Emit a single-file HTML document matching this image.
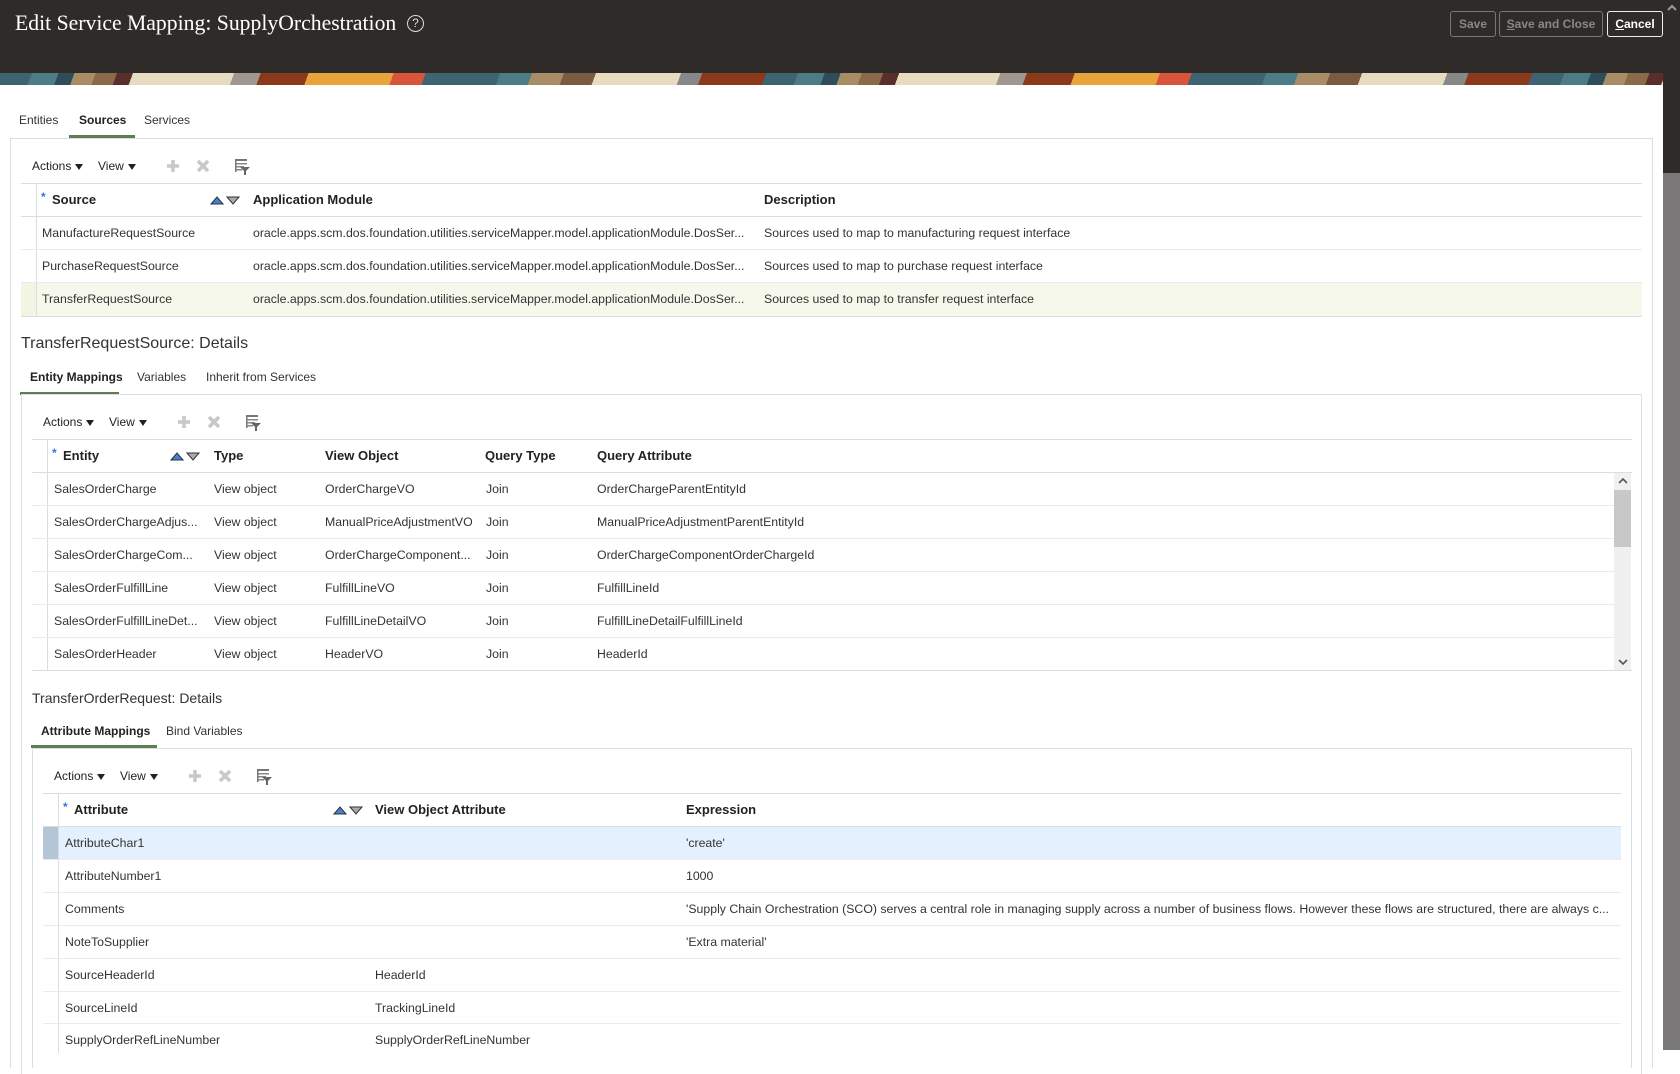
<!DOCTYPE html>
<html><head><meta charset="utf-8">
<style>
*{box-sizing:border-box;margin:0;padding:0}
body{width:1680px;height:1050px;overflow:hidden;background:#fff;font-family:"Liberation Sans",Arial,sans-serif;color:#333;position:relative;font-size:12px}
.a{position:absolute;white-space:nowrap}
.hdr{position:absolute;left:0;top:0;width:1663px;height:73px;background:#2f2b28}
.banner{position:absolute;left:0;top:73px;width:1663px;height:12px;background:repeating-linear-gradient(110deg,#3e6471 0 30px,#4c7c88 30px 55px,#2f4d58 55px 70px,#a88c66 70px 90px,#8a6a48 90px 110px,#5a2e2a 110px 125px,#e8dcc0 125px 220px,#a09890 220px 245px,#8a3a1a 245px 290px,#e8a33a 290px 370px,#d8543a 370px 400px,#3e6471 400px 470px,#4c7c88 470px 500px,#a88c66 500px 530px,#7a5a40 530px 560px,#e8dcc0 560px 640px,#888 640px 660px,#8a3a1a 660px 720px)}
.title{left:15px;top:11px;font-family:"Liberation Serif",serif;font-size:21.7px;color:#fff}
.help{left:407px;top:15px;width:17px;height:17px;border:1.5px solid #ddd;border-radius:50%;color:#ddd;font-size:12px;text-align:center;line-height:14px}
.btn{position:absolute;top:11px;height:26px;border:1px solid #777;border-radius:3px;color:#888;font-size:12px;font-weight:bold;text-align:center;line-height:24px}
.sb{position:absolute;left:1663px;top:0;width:17px;height:1050px;background:#7a7878}
.sbt{position:absolute;left:1663px;top:0;width:17px;height:173px;background:#2f2b28}
.tab{font-size:12px;color:#333}
.tab.on{font-weight:bold;color:#222}
.ul{position:absolute;height:3px;background:#5f7d4f}
.box{position:absolute;border:1px solid #d6dfe6}
.hl{position:absolute;height:1px;background:#d6dfe6}
.rl{position:absolute;height:1px;background:#e8ecef}
.vl{position:absolute;width:1px;background:#d6dfe6}
.th{font-weight:bold;font-size:13px;color:#222}
.td{font-size:12.3px;color:#333}
.star{color:#2a7bd5;font-size:12px;font-weight:bold}
.tb{font-size:12px;color:#222}
.tri{display:inline-block;width:0;height:0;border-left:4.5px solid transparent;border-right:4.5px solid transparent;border-top:6px solid #222;margin-left:4px;vertical-align:middle}
</style></head><body>
<div class="hdr"></div>
<div class="banner"></div>
<div class="a title">Edit Service Mapping: SupplyOrchestration</div>
<div class="a help">?</div>
<div class="btn" style="left:1450px;width:46px">Save</div>
<div class="btn" style="left:1499px;width:104px"><u>S</u>ave and Close</div>
<div class="btn" style="left:1607px;width:56px;border-color:#eee;color:#fff"><u>C</u>ancel</div>
<div class="sb"></div><div class="sbt"></div>
<svg class="a" style="left:1666px;top:3px" width="12" height="10"><path d="M2 7 L6 3 L10 7" stroke="#999" stroke-width="2" fill="none"/></svg>

<div class="a tab" style="left:19px;top:113px">Entities</div>
<div class="a tab on" style="left:79px;top:113px">Sources</div>
<div class="a tab" style="left:144px;top:113px">Services</div>
<div class="ul" style="left:69px;top:135px;width:66px"></div>
<div class="box" style="left:10px;top:138px;width:1643px;height:930px;border-bottom:none"></div>

<svg width="0" height="0" style="position:absolute"><defs>
<g id="tools">
<path d="M6 5v12M0 11h12" stroke="#c8c8c8" stroke-width="3.5"/>
<path d="M31 6l10 10M41 6l-10 10" stroke="#c8c8c8" stroke-width="3.5"/>
<rect x="68" y="4" width="12" height="2" fill="#777"/><rect x="68" y="8" width="12" height="1.5" fill="#888"/><rect x="68" y="11" width="9" height="1.5" fill="#888"/><rect x="68" y="14" width="7" height="1.5" fill="#888"/><rect x="68" y="4" width="1.5" height="13" fill="#777"/><path d="M73 12h10l-4 4v4h-2v-4z" fill="#666"/>
</g></defs></svg>
<div class="a tb" style="left:32px;top:159px">Actions<span class="tri"></span></div>
<div class="a tb" style="left:98px;top:159px">View<span class="tri"></span></div>
<svg class="a" style="left:167px;top:155px" width="90" height="22"><use href="#tools"/></svg>

<div class="hl" style="left:21px;top:183px;width:1621px"></div>
<div class="vl" style="left:36px;top:183px;height:133px"></div>
<div class="a star" style="left:41px;top:190px">*</div>
<div class="a th" style="left:52px;top:192px">Source</div>
<svg class="a" style="left:210px;top:194px" width="34" height="12"><path d="M1 10L7 3L13 10Z" fill="#4a7fc8" stroke="#234" stroke-width="1"/><path d="M17 3L23 10L29 3Z" fill="#aaa" stroke="#333" stroke-width="1"/></svg>
<div class="a th" style="left:253px;top:192px">Application Module</div>
<div class="a th" style="left:764px;top:192px">Description</div>
<div class="hl" style="left:21px;top:216px;width:1621px"></div>
<div class="a td" style="left:42px;top:226px">ManufactureRequestSource</div>
<div class="a td" style="left:253px;top:226px">oracle.apps.scm.dos.foundation.utilities.serviceMapper.model.applicationModule.DosSer...</div>
<div class="a td" style="left:764px;top:226px">Sources used to map to manufacturing request interface</div>
<div class="rl" style="left:21px;top:249px;width:1621px"></div>
<div class="a td" style="left:42px;top:259px">PurchaseRequestSource</div>
<div class="a td" style="left:253px;top:259px">oracle.apps.scm.dos.foundation.utilities.serviceMapper.model.applicationModule.DosSer...</div>
<div class="a td" style="left:764px;top:259px">Sources used to map to purchase request interface</div>
<div class="rl" style="left:21px;top:282px;width:1621px"></div>
<div class="a" style="left:37px;top:283px;width:1605px;height:33px;background:#f7f8ec"></div>
<div class="a" style="left:21px;top:283px;width:15px;height:33px;background:#f2f4e4"></div>
<div class="a td" style="left:42px;top:292px">TransferRequestSource</div>
<div class="a td" style="left:253px;top:292px">oracle.apps.scm.dos.foundation.utilities.serviceMapper.model.applicationModule.DosSer...</div>
<div class="a td" style="left:764px;top:292px">Sources used to map to transfer request interface</div>
<div class="hl" style="left:21px;top:316px;width:1621px"></div>

<div class="a" style="left:21px;top:335px;font-size:16px;color:#333">TransferRequestSource: Details</div>
<div class="a tab on" style="left:30px;top:370px">Entity Mappings</div>
<div class="a tab" style="left:137px;top:370px">Variables</div>
<div class="a tab" style="left:206px;top:370px">Inherit from Services</div>
<div class="ul" style="left:20px;top:392px;width:99px"></div>
<div class="box" style="left:21px;top:394px;width:1621px;height:680px;border-bottom:none"></div>

<div class="a tb" style="left:43px;top:415px">Actions<span class="tri"></span></div>
<div class="a tb" style="left:109px;top:415px">View<span class="tri"></span></div>
<svg class="a" style="left:178px;top:411px" width="90" height="22"><use href="#tools"/></svg>

<div class="hl" style="left:32px;top:439px;width:1600px"></div>
<div class="vl" style="left:47px;top:439px;height:231px"></div>
<div class="a star" style="left:52px;top:446px">*</div>
<div class="a th" style="left:63px;top:448px">Entity</div>
<svg class="a" style="left:170px;top:450px" width="34" height="12"><path d="M1 10L7 3L13 10Z" fill="#4a7fc8" stroke="#234" stroke-width="1"/><path d="M17 3L23 10L29 3Z" fill="#aaa" stroke="#333" stroke-width="1"/></svg>
<div class="a th" style="left:214px;top:448px">Type</div>
<div class="a th" style="left:325px;top:448px">View Object</div>
<div class="a th" style="left:485px;top:448px">Query Type</div>
<div class="a th" style="left:597px;top:448px">Query Attribute</div>
<div class="hl" style="left:32px;top:472px;width:1600px"></div>
<div class="a" style="left:1614px;top:473px;width:17px;height:197px;background:#f0f0f0"></div>
<div class="a" style="left:1614px;top:490px;width:17px;height:57px;background:#c8c8c8"></div>
<svg class="a" style="left:1617px;top:476px" width="12" height="10"><path d="M2 7L6 3L10 7" stroke="#555" stroke-width="1.6" fill="none"/></svg>
<svg class="a" style="left:1617px;top:657px" width="12" height="10"><path d="M2 3L6 7L10 3" stroke="#555" stroke-width="1.6" fill="none"/></svg>

<div class="a td" style="left:54px;top:482px">SalesOrderCharge</div><div class="a td" style="left:214px;top:482px">View object</div><div class="a td" style="left:325px;top:482px">OrderChargeVO</div><div class="a td" style="left:486px;top:482px">Join</div><div class="a td" style="left:597px;top:482px">OrderChargeParentEntityId</div>
<div class="rl" style="left:32px;top:505px;width:1582px"></div>
<div class="a td" style="left:54px;top:515px">SalesOrderChargeAdjus...</div><div class="a td" style="left:214px;top:515px">View object</div><div class="a td" style="left:325px;top:515px">ManualPriceAdjustmentVO</div><div class="a td" style="left:486px;top:515px">Join</div><div class="a td" style="left:597px;top:515px">ManualPriceAdjustmentParentEntityId</div>
<div class="rl" style="left:32px;top:538px;width:1582px"></div>
<div class="a td" style="left:54px;top:548px">SalesOrderChargeCom...</div><div class="a td" style="left:214px;top:548px">View object</div><div class="a td" style="left:325px;top:548px">OrderChargeComponent...</div><div class="a td" style="left:486px;top:548px">Join</div><div class="a td" style="left:597px;top:548px">OrderChargeComponentOrderChargeId</div>
<div class="rl" style="left:32px;top:571px;width:1582px"></div>
<div class="a td" style="left:54px;top:581px">SalesOrderFulfillLine</div><div class="a td" style="left:214px;top:581px">View object</div><div class="a td" style="left:325px;top:581px">FulfillLineVO</div><div class="a td" style="left:486px;top:581px">Join</div><div class="a td" style="left:597px;top:581px">FulfillLineId</div>
<div class="rl" style="left:32px;top:604px;width:1582px"></div>
<div class="a td" style="left:54px;top:614px">SalesOrderFulfillLineDet...</div><div class="a td" style="left:214px;top:614px">View object</div><div class="a td" style="left:325px;top:614px">FulfillLineDetailVO</div><div class="a td" style="left:486px;top:614px">Join</div><div class="a td" style="left:597px;top:614px">FulfillLineDetailFulfillLineId</div>
<div class="rl" style="left:32px;top:637px;width:1582px"></div>
<div class="a td" style="left:54px;top:647px">SalesOrderHeader</div><div class="a td" style="left:214px;top:647px">View object</div><div class="a td" style="left:325px;top:647px">HeaderVO</div><div class="a td" style="left:486px;top:647px">Join</div><div class="a td" style="left:597px;top:647px">HeaderId</div>
<div class="hl" style="left:32px;top:670px;width:1600px"></div>

<div class="a" style="left:32px;top:690px;font-size:14px;color:#333">TransferOrderRequest: Details</div>
<div class="a tab on" style="left:41px;top:724px">Attribute Mappings</div>
<div class="a tab" style="left:166px;top:724px">Bind Variables</div>
<div class="ul" style="left:31px;top:745px;width:126px"></div>
<div class="box" style="left:32px;top:748px;width:1600px;height:320px;border-bottom:none"></div>

<div class="a tb" style="left:54px;top:769px">Actions<span class="tri"></span></div>
<div class="a tb" style="left:120px;top:769px">View<span class="tri"></span></div>
<svg class="a" style="left:189px;top:765px" width="90" height="22"><use href="#tools"/></svg>

<div class="hl" style="left:43px;top:793px;width:1578px"></div>
<div class="vl" style="left:58px;top:793px;height:260px"></div>
<div class="a star" style="left:63px;top:800px">*</div>
<div class="a th" style="left:74px;top:802px">Attribute</div>
<svg class="a" style="left:333px;top:804px" width="34" height="12"><path d="M1 10L7 3L13 10Z" fill="#4a7fc8" stroke="#234" stroke-width="1"/><path d="M17 3L23 10L29 3Z" fill="#aaa" stroke="#333" stroke-width="1"/></svg>
<div class="a th" style="left:375px;top:802px">View Object Attribute</div>
<div class="a th" style="left:686px;top:802px">Expression</div>
<div class="hl" style="left:43px;top:826px;width:1578px"></div>
<div class="a" style="left:59px;top:827px;width:1562px;height:32px;background:#e4f0fd"></div>
<div class="a" style="left:43px;top:827px;width:15px;height:32px;background:#b4c5d5"></div>
<div class="a td" style="left:65px;top:836px">AttributeChar1</div><div class="a td" style="left:686px;top:836px">'create'</div>
<div class="rl" style="left:43px;top:859px;width:1578px"></div>
<div class="a td" style="left:65px;top:869px">AttributeNumber1</div><div class="a td" style="left:686px;top:869px">1000</div>
<div class="rl" style="left:43px;top:892px;width:1578px"></div>
<div class="a td" style="left:65px;top:902px">Comments</div><div class="a td" style="left:686px;top:902px">'Supply Chain Orchestration (SCO) serves a central role in managing supply across a number of business flows. However these flows are structured, there are always c...</div>
<div class="rl" style="left:43px;top:925px;width:1578px"></div>
<div class="a td" style="left:65px;top:935px">NoteToSupplier</div><div class="a td" style="left:686px;top:935px">'Extra material'</div>
<div class="rl" style="left:43px;top:958px;width:1578px"></div>
<div class="a td" style="left:65px;top:968px">SourceHeaderId</div><div class="a td" style="left:375px;top:968px">HeaderId</div>
<div class="rl" style="left:43px;top:991px;width:1578px"></div>
<div class="a td" style="left:65px;top:1001px">SourceLineId</div><div class="a td" style="left:375px;top:1001px">TrackingLineId</div>
<div class="rl" style="left:43px;top:1023px;width:1578px"></div>
<div class="a td" style="left:65px;top:1033px">SupplyOrderRefLineNumber</div><div class="a td" style="left:375px;top:1033px">SupplyOrderRefLineNumber</div>
</body></html>
